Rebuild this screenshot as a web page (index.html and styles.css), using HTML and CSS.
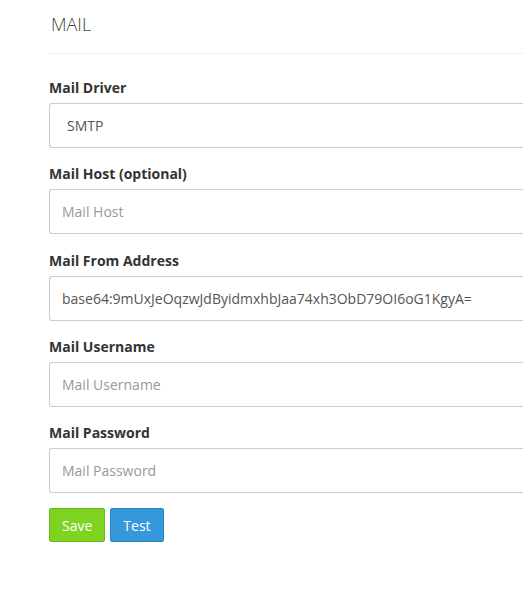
FILE: index.html
```html
<!DOCTYPE html>
<html>
<head>
<meta charset="utf-8">
<link rel="stylesheet" href="styles.css">
</head>
<body>
<div class="panel">
  <h3 class="panel-title">MAIL</h3>
  <form class="form">
    <div class="form-group">
      <label class="label">Mail Driver</label>
      <select class="control select"><option>SMTP</option></select>
    </div>
    <div class="form-group">
      <label class="label">Mail Host (optional)</label>
      <input class="control" type="text" placeholder="Mail Host">
    </div>
    <div class="form-group">
      <label class="label">Mail From Address</label>
      <input class="control" type="text" value="base64:9mUxJeOqzwJdByidmxhbJaa74xh3ObD79OI6oG1KgyA=">
    </div>
    <div class="form-group">
      <label class="label">Mail Username</label>
      <input class="control" type="text" placeholder="Mail Username">
    </div>
    <div class="form-group form-group-last">
      <label class="label">Mail Password</label>
      <input class="control" type="password" placeholder="Mail Password">
    </div>
    <div class="actions">
      <button type="button" class="btn btn-save">Save</button>
      <button type="button" class="btn btn-test">Test</button>
    </div>
  </form>
</div>
</body>
</html>
```

FILE: styles.css
```css
html, body {
  margin: 0;
  padding: 0;
  overflow: hidden;
  background: #fff;
}
body {
  font-family: "Open Sans", "DejaVu Sans", sans-serif;
  color: #333;
  font-size: 14px;
  line-height: 20px;
}
.panel {
  padding-left: 49px;
}
.panel-title {
  margin: 0;
  padding: 11px 0 16px 2px;
  font-size: 18px;
  line-height: 26px;
  font-weight: 300;
  color: #444;
  border-bottom: 1px solid #eee;
}
.form {
  padding-top: 24px;
}
.form-group {
  margin-bottom: 16.3px;
}
.form-group-last {
  margin-bottom: 15px;
}
.label {
  display: block;
  font-weight: 700;
  font-size: 14px;
  line-height: 20px;
  margin-bottom: 5px;
  color: #333;
}
.control {
  display: block;
  box-sizing: border-box;
  width: 100%;
  height: 45px;
  padding: 0 12px;
  border: 1px solid #ccc;
  border-right: none;
  border-radius: 3px 0 0 3px;
  background: #fff;
  font-family: "Open Sans", "DejaVu Sans", sans-serif;
  font-size: 14px;
  color: #555;
  outline: none;
}
.control::placeholder {
  color: #999;
}
.select {
  appearance: none;
  -webkit-appearance: none;
  padding-left: 17px;
}
.actions {
  display: flex;
  gap: 5px;
}
.btn {
  height: 34px;
  padding: 0 12px;
  font-family: "Open Sans", "DejaVu Sans", sans-serif;
  font-size: 14px;
  color: #fff;
  border-radius: 2px;
  border: 1px solid;
  cursor: pointer;
}
.btn-save {
  background: #7ed321;
  border-color: #6ab81b;
}
.btn-test {
  background: #3498db;
  border-color: #2a84c4;
}
```
